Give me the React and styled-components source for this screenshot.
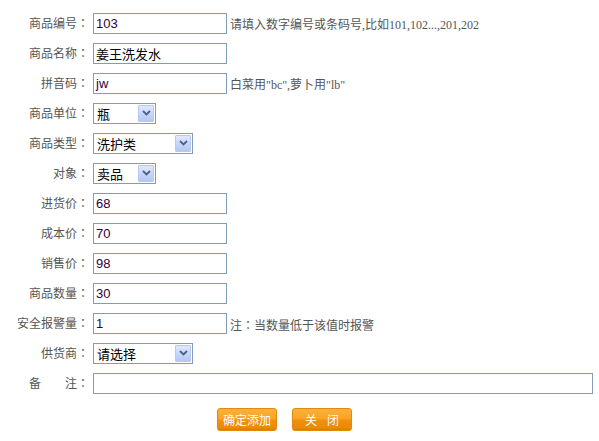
import React from "react";
import styled, { createGlobalStyle } from "styled-components";

const Global = createGlobalStyle`
  html, body { margin: 0; padding: 0; background: #fff; }
  body { font-family: "Noto Sans CJK SC", "Liberation Sans", sans-serif; font-size: 12px; color: #555; }
`;

const Form = styled.div`
  padding-top: 8px;
  width: 599px;
`;

const Row = styled.div`
  display: flex;
  align-items: center;
  height: 30px;
`;

const Label = styled.div`
  width: 89px;
  flex: none;
  text-align: right;
  font-size: 12px;
  color: #555;
  white-space: pre;
  line-height: 20px;
`;

const Colon = styled.span`
  font-family: "Noto Sans CJK TC", sans-serif;
`;

const Spacer = styled.span`
  display: inline-block;
  width: ${(p) => p.$w}px;
`;

const Field = styled.div`
  margin-left: 4px;
  display: flex;
  align-items: center;
`;

const TextBox = styled.div`
  box-sizing: border-box;
  width: ${(p) => p.$w || 134}px;
  height: 21px;
  border: 1px solid #7f9db9;
  background: #fff;
  padding-left: 2px;
  font-family: ${(p) => (p.$cjk ? `"Noto Sans CJK SC", sans-serif` : `"Liberation Sans", "Noto Sans CJK SC", sans-serif`)};
  font-size: 13px;
  line-height: 19px;
  color: ${(p) => (p.$cjk ? "#000" : "#300040")};
  white-space: nowrap;
  overflow: hidden;
`;

const Hint = styled.span`
  margin-left: 3px;
  font-family: ${(p) => (p.$serif ? `"Liberation Serif", "Noto Sans CJK SC", serif` : `"Noto Sans CJK SC", sans-serif`)};
  font-size: 12px;
  color: #555;
  white-space: nowrap;
  line-height: 20px;
  padding-top: 3px;
`;

const SelectBox = styled.div`
  box-sizing: border-box;
  width: ${(p) => p.$w}px;
  height: 21px;
  border: 1px solid #7f9db9;
  background: #fff;
  display: flex;
  align-items: stretch;
  justify-content: space-between;
`;

const SelectText = styled.span`
  padding-left: 3px;
  font-family: "Noto Sans CJK SC", sans-serif;
  font-size: 13px;
  line-height: 19px;
  color: #000;
`;

const Arrow = styled.span`
  width: 16px;
  margin: 1px;
  box-sizing: border-box;
  border: 1px solid #b7c9ef;
  border-radius: 1px;
  background: linear-gradient(180deg, #dfe8fd 0%, #c5d5fb 55%, #b4c7f5 100%);
  display: flex;
  align-items: center;
  justify-content: center;
`;

const ButtonRow = styled.div`
  display: flex;
  gap: 15px;
  padding-left: 217px;
  margin-top: 10px;
`;

const Button = styled.div`
  box-sizing: border-box;
  width: 60px;
  height: 23px;
  border: 1px solid #e08a10;
  border-radius: 3px;
  background: linear-gradient(180deg, #fbb03a 0%, #f9a424 45%, #f09010 55%, #ec8a06 90%, #d77a00 100%);
  color: #fff;
  font-family: "Noto Sans CJK SC", sans-serif;
  font-size: 12px;
  line-height: 21px;
  text-align: center;
  white-space: pre;
  box-shadow: 0 1px 1px rgba(200, 120, 0, 0.35);
`;

const Chevron = () => (
  <svg width="9" height="6" viewBox="0 0 9 6">
    <path d="M1 1 L4.5 4.5 L8 1" fill="none" stroke="#4d6185" strokeWidth="1.8" />
  </svg>
);

const Select = ({ w, value }) => (
  <SelectBox $w={w}>
    <SelectText>{value}</SelectText>
    <Arrow>
      <Chevron />
    </Arrow>
  </SelectBox>
);

const L = ({ children }) => (
  <Label>
    {children}
    <Colon>：</Colon>
  </Label>
);

export default function App() {
  return (
    <>
      <Global />
      <Form>
        <Row>
          <L>商品编号</L>
          <Field>
            <TextBox>103</TextBox>
            <Hint $serif>请填入数字编号或条码号,比如101,102...,201,202</Hint>
          </Field>
        </Row>
        <Row>
          <L>商品名称</L>
          <Field>
            <TextBox $cjk>姜王洗发水</TextBox>
          </Field>
        </Row>
        <Row>
          <L>拼音码</L>
          <Field>
            <TextBox>jw</TextBox>
            <Hint $serif>白菜用"bc",萝卜用"lb"</Hint>
          </Field>
        </Row>
        <Row>
          <L>商品单位</L>
          <Field>
            <Select w={63} value="瓶" />
          </Field>
        </Row>
        <Row>
          <L>商品类型</L>
          <Field>
            <Select w={100} value="洗护类" />
          </Field>
        </Row>
        <Row>
          <L>对象</L>
          <Field>
            <Select w={63} value="卖品" />
          </Field>
        </Row>
        <Row>
          <L>进货价</L>
          <Field>
            <TextBox>68</TextBox>
          </Field>
        </Row>
        <Row>
          <L>成本价</L>
          <Field>
            <TextBox>70</TextBox>
          </Field>
        </Row>
        <Row>
          <L>销售价</L>
          <Field>
            <TextBox>98</TextBox>
          </Field>
        </Row>
        <Row>
          <L>商品数量</L>
          <Field>
            <TextBox>30</TextBox>
          </Field>
        </Row>
        <Row>
          <L>安全报警量</L>
          <Field>
            <TextBox>1</TextBox>
            <Hint>注<Colon>：</Colon>当数量低于该值时报警</Hint>
          </Field>
        </Row>
        <Row>
          <L>供货商</L>
          <Field>
            <Select w={100} value="请选择" />
          </Field>
        </Row>
        <Row>
          <L>
            备<Spacer $w={24} />注
          </L>
          <Field>
            <TextBox $w={500}></TextBox>
          </Field>
        </Row>
        <ButtonRow>
          <Button>确定添加</Button>
          <Button>
            关<Spacer $w={10} />闭
          </Button>
        </ButtonRow>
      </Form>
    </>
  );
}
